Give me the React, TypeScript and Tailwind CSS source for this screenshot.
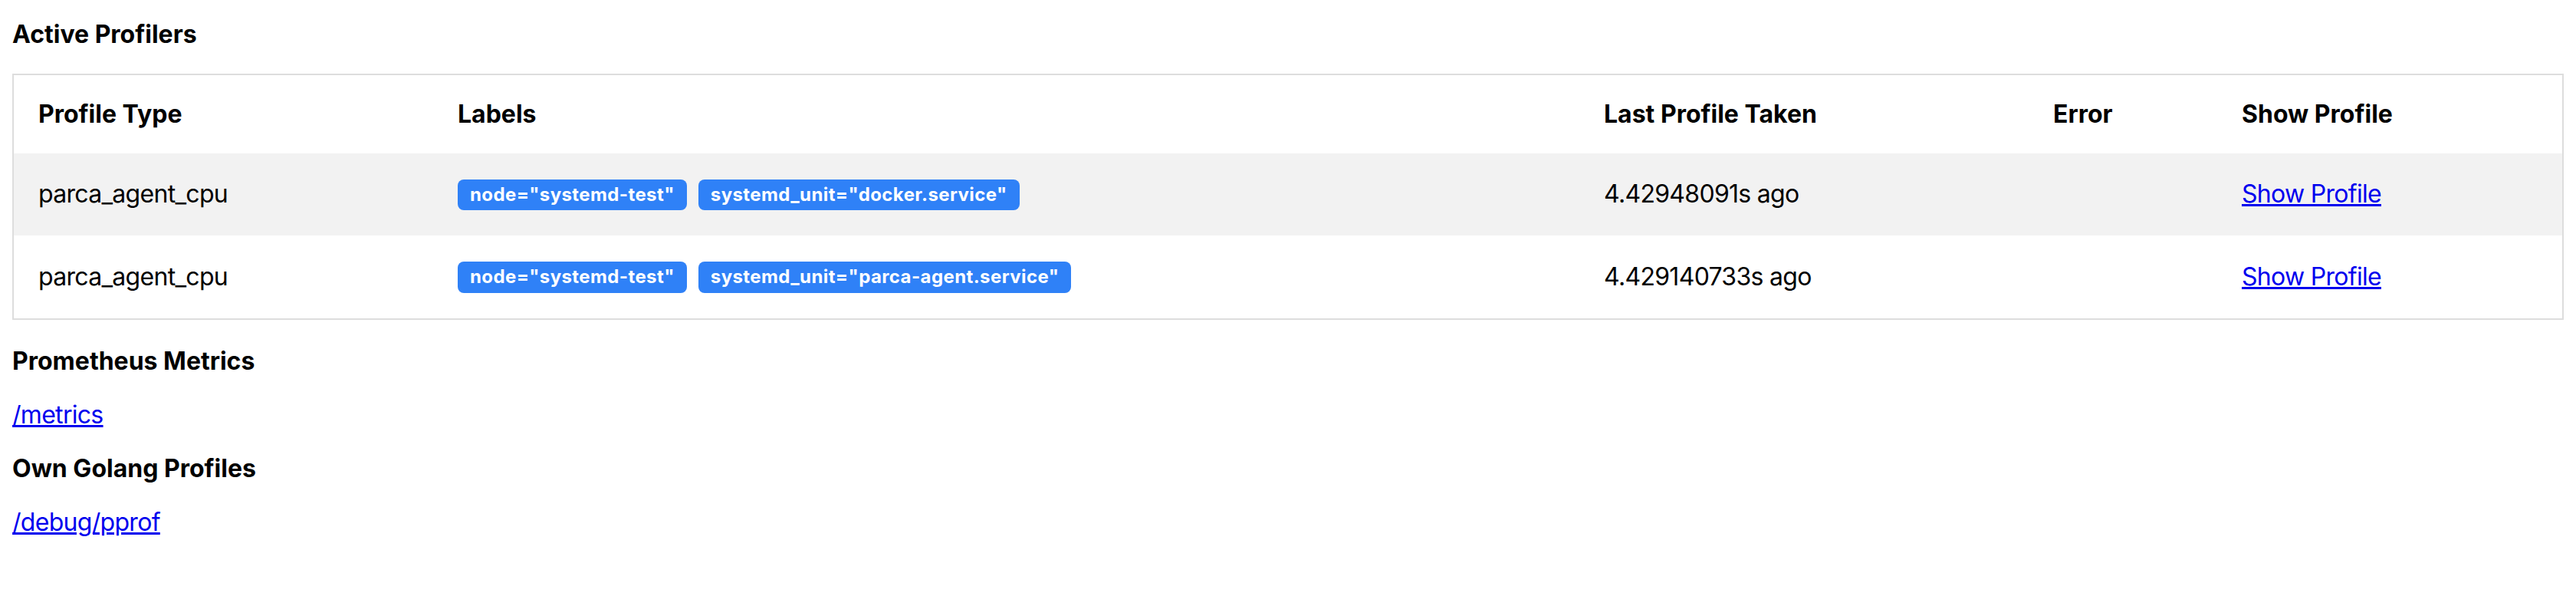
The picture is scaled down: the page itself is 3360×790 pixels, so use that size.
type Profiler = {
  type: string;
  labels: string[];
  lastTaken: string;
  error: string;
  href: string;
};

const profilers: Profiler[] = [
  {
    type: "parca_agent_cpu",
    labels: ['node="systemd-test"', 'systemd_unit="docker.service"'],
    lastTaken: "4.42948091s ago",
    error: "",
    href: "/query?id=docker",
  },
  {
    type: "parca_agent_cpu",
    labels: ['node="systemd-test"', 'systemd_unit="parca-agent.service"'],
    lastTaken: "4.429140733s ago",
    error: "",
    href: "/query?id=parca-agent",
  },
];

const LabelBadge = ({ text }: { text: string }) => (
  <span className="mr-[15px] inline-block rounded-[8px] bg-[#2f81f7] px-4 py-[8.4px] text-[24px] leading-none font-bold tracking-[0.4px] text-white">
    {text}
  </span>
);

export default function App() {
  return (
    <div className="min-h-screen bg-white px-4 pt-[26px] font-['Inter','Liberation_Sans',sans-serif] text-[32px] leading-[38px] text-black">
      <h2 className="font-bold">Active Profilers</h2>

      <table className="mt-8 w-full table-fixed border-2 border-[#dddddd]">
        <thead>
          <tr>
            <th className="w-[548px] p-8 text-left font-bold">Profile Type</th>
            <th className="w-[1495px] p-8 text-left font-bold">Labels</th>
            <th className="w-[586px] p-8 text-left font-bold">
              Last Profile Taken
            </th>
            <th className="w-[246px] p-8 text-left font-bold">Error</th>
            <th className="p-8 text-left font-bold">Show Profile</th>
          </tr>
        </thead>
        <tbody>
          {profilers.map((p, i) => (
            <tr key={i} className={i % 2 == 0 ? "bg-[#f2f2f2]" : "bg-white"}>
              <td className="p-8 pb-[33px] tracking-[-0.7px]">{p.type}</td>
              <td className="p-8 pb-[33px]">
                {p.labels.map((l) => (
                  <LabelBadge key={l} text={l} />
                ))}
              </td>
              <td className="p-8 pb-[33px] tracking-[-0.7px]">{p.lastTaken}</td>
              <td className="p-8 pb-[33px] tracking-[-0.7px]">{p.error}</td>
              <td className="p-8 pb-[33px] tracking-[-0.7px]">
                <a href={p.href} className="text-[#0000ee] underline">
                  Show Profile
                </a>
              </td>
            </tr>
          ))}
        </tbody>
      </table>

      <h2 className="mt-[35px] font-bold">Prometheus Metrics</h2>
      <div className="mt-8 tracking-[-0.7px]">
        <a href="/metrics" className="text-[#0000ee] underline">
          /metrics
        </a>
      </div>

      <h2 className="mt-8 font-bold">Own Golang Profiles</h2>
      <div className="mt-8 tracking-[-0.7px]">
        <a href="/debug/pprof" className="text-[#0000ee] underline">
          /debug/pprof
        </a>
      </div>
    </div>
  );
}
